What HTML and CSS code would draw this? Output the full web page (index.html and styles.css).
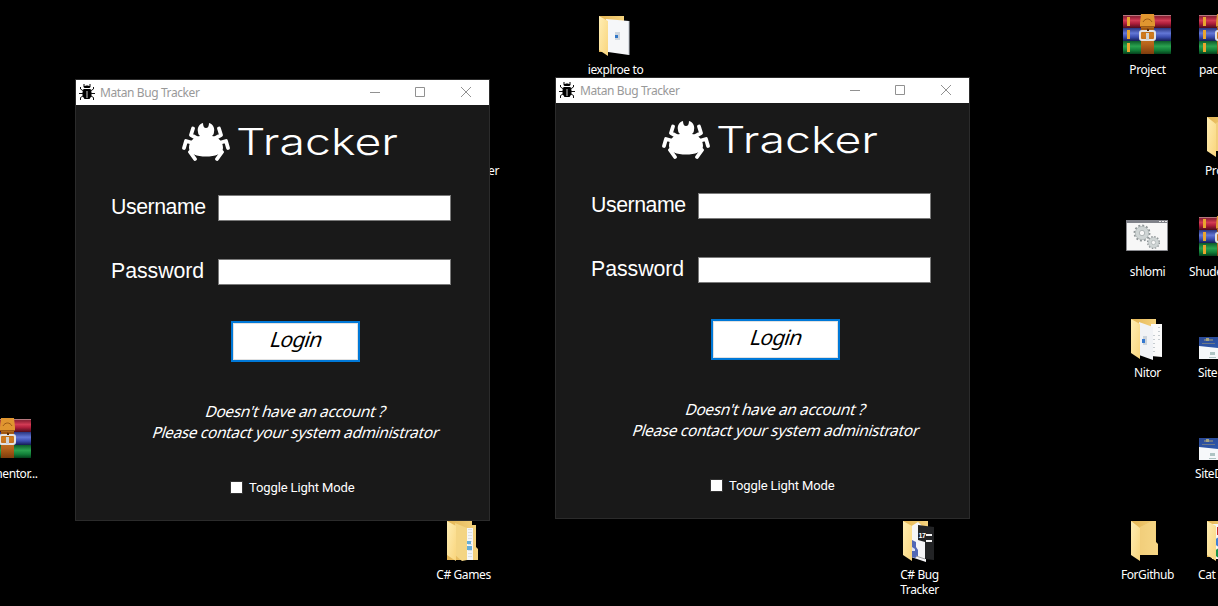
FILE: index.html
```html
<!DOCTYPE html>
<html lang="en">
<head>
<meta charset="utf-8">
<title>Matan Bug Tracker</title>
<link rel="stylesheet" href="styles.css">
</head>
<body>
<svg class="defs" aria-hidden="true">
  <defs>
    <linearGradient id="red" x2="0" y2="1"><stop offset="0" stop-color="#c9a0a0"/><stop offset=".12" stop-color="#8e1f34"/><stop offset=".42" stop-color="#d23b54"/><stop offset=".65" stop-color="#b01f3c"/><stop offset="1" stop-color="#4d0c1c"/></linearGradient>
    <linearGradient id="blue" x2="0" y2="1"><stop offset="0" stop-color="#29357e"/><stop offset=".4" stop-color="#6377d6"/><stop offset=".7" stop-color="#3a4cae"/><stop offset="1" stop-color="#151c52"/></linearGradient>
    <linearGradient id="green" x2="0" y2="1"><stop offset="0" stop-color="#0d5a2a"/><stop offset=".4" stop-color="#2aa24f"/><stop offset=".7" stop-color="#128039"/><stop offset="1" stop-color="#043f1b"/></linearGradient>
    <linearGradient id="strap" x2="0" y2="1"><stop offset="0" stop-color="#e59a34"/><stop offset=".3" stop-color="#d98a25"/><stop offset=".36" stop-color="#9b5412"/><stop offset=".5" stop-color="#d27d1e"/><stop offset=".75" stop-color="#b8651b"/><stop offset="1" stop-color="#7e3c0d"/></linearGradient>
    <linearGradient id="flap" x2="1" y2="1"><stop offset="0" stop-color="#ffeeb4"/><stop offset="1" stop-color="#f9d57d"/></linearGradient>
    <linearGradient id="back" x2="1" y2="0"><stop offset="0" stop-color="#e3b453"/><stop offset="1" stop-color="#f5d37f"/></linearGradient>
    <linearGradient id="header" x2="1" y2="1"><stop offset="0" stop-color="#2c4a96"/><stop offset="1" stop-color="#2d5fb8"/></linearGradient>
  </defs>
  <symbol id="rar" viewBox="0 0 48 48">
    <path fill="url(#red)" d="M0 3h48v13H0z"/><path fill="url(#blue)" d="M0 16h48v13H0z"/><path fill="url(#green)" d="M0 29h48v13H0z"/>
    <path fill="#e9a62f" d="M4 5h3v9H4zM4 18h3v9H4zM4 31h3v9H4z"/>
    <path fill="url(#strap)" d="M18 2h13v40H18z"/>
    <path fill="#e09630" d="M17 11l1-9h13l1 9v3H17z"/>
    <path fill="none" stroke="#9b5916" d="M20 10c2-4 7-4 9 0M17 14.500h15"/><path fill="#8a4a10" d="M24 16h1v2h-1z"/>
    <rect x="17" y="19" width="15" height="9" rx="2" fill="none" stroke="#e2e2e2" stroke-width="2"/>
    <path fill="#d0d4d6" d="M23 21h3v7h-3z"/><path fill="#5a2b08" d="M24 17h2v2h-2z"/>
  </symbol>
  <symbol id="folder" viewBox="0 0 48 48">
    <path fill="url(#back)" d="M8 4h25v21l2 2v11H8z"/>
    <path fill="#f7d98c" d="M17 10l12-6h3v20l2 3v11H16z" opacity=".6"/>
    <path fill="url(#flap)" d="M8 4l9 7v33l-9-6z"/>
  </symbol>
  <symbol id="folder-doc" viewBox="0 0 48 48">
    <path fill="url(#back)" d="M8 4h25v36H8z"/>
    <path fill="#f6f7f9" d="M15 7l23 2v34l-21-3z"/><path stroke="#b9bfc9" d="M38 9v34"/>
    <path fill="#cfd6de" d="M24 20h5v8h-5z"/><path fill="#3478c7" d="M24 23h3v3h-3z"/>
    <path fill="url(#flap)" d="M8 4l9 5v35l-9-6z"/>
  </symbol>
  <symbol id="folder-docs" viewBox="0 0 48 48">
    <path fill="url(#back)" d="M8 4h25v34H8z"/>
    <path fill="#fafafa" d="M28 9h11v33l-11-1z"/><path stroke="#c6ccd0" stroke-dasharray="1 3" stroke-width="2" d="M36 12v14M31 20v18"/>
    <path fill="#f1f3f6" d="M16 7l14 5v33l-14-5z"/><path fill="#cbd3db" d="M20 21h4v9h-4z"/><path fill="#3478d0" d="M19 24h3v4h-3z"/>
    <path fill="url(#flap)" d="M8 4l9 5v35l-9-6z"/>
  </symbol>
  <symbol id="folder-games" viewBox="0 0 48 48">
    <path fill="url(#back)" d="M8 4h25v4h4v22l2 2v11H8z"/>
    <path fill="#f4f6f8" d="M27 11h7v32h-7z"/><path stroke="#dbe0e3" stroke-dasharray="1 2" stroke-width="4" d="M31 12v30"/><path fill="#66add8" d="M28 24h4v3h-4zM28 29h5v4h-5z"/>
    <path fill="#f4d584" d="M16 6l12 5v32l-5 1-7-6z"/>
    <path fill="url(#flap)" d="M8 4l9 5v35l-9-6z"/>
  </symbol>
  <symbol id="folder-dark" viewBox="0 0 48 48">
    <path fill="url(#back)" d="M8 4h25v34H8z"/>
    <path fill="#f5f5f7" d="M15 10l8-5 8 8v32l-15-5z"/>
    <path fill="#222325" d="M23 8l16 2v33l-9-1V25l-7-2z"/>
    <path fill="#f6f6f6" d="M31 17h6v2h-6zM31 23h6v2h-6z"/>
    <text x="23.500" y="21" font-family="Liberation Sans, sans-serif" font-size="7" font-weight="bold" fill="#fff">17</text>
    <path fill="#5268b6" d="M17 23l4 2v5l2 3v6l-3 2-3-1z"/><path fill="#dde2f3" d="M17 30l3 2v2h-3z"/><path stroke="#a5a5a8" d="M21 39l9 3"/>
    <path fill="url(#flap)" d="M8 4l9 5v35l-9-6z"/>
  </symbol>
  <symbol id="folder-cat" viewBox="0 0 48 48">
    <path fill="url(#back)" d="M8 4h25v36H8z"/><path fill="#f6f6f4" d="M13 7h24v35H13z"/>
    <path fill="#c9302b" d="M18 10h15v8H18z"/><circle cx="21" cy="25" r="5" fill="#3e7fd4"/><circle cx="21" cy="36" r="5" fill="#199348"/>
    <path fill="url(#flap)" d="M8 4l9 5v35l-9-6z"/>
  </symbol>
  <symbol id="gear" viewBox="-10 -10 20 20">
    <circle r="8.2" fill="none" stroke="#8f9698" stroke-width="2.4" stroke-dasharray="2.15 2.14"/>
    <circle r="5.3" fill="none" stroke="#cfd5d5" stroke-width="4.6"/><circle r="7.4" fill="none" stroke="#a8afb0" stroke-width=".7"/><circle r="3" fill="none" stroke="#9ca3a5" stroke-width=".8"/>
  </symbol>
  <symbol id="batch" viewBox="0 2 48 48">
    <path fill="#f7f7f7" stroke="#8a8b90" d="M3.500 8.500h41v30h-41z"/><path fill="#80828a" d="M3 8h42v3H3z"/>
    <path fill="#e8e8e8" d="M36 9h2v1h-2zM39 9h2v1h-2zM42 9h2v1h-2z"/>
    <use href="#gear" x="10" y="12" width="18" height="18"/><use href="#gear" x="23.500" y="23.500" width="14" height="14"/>
  </symbol>
  <symbol id="site" viewBox="0 -1 48 48">
    <path fill="#f6f8fa" d="M0 21h48v22H0z"/><path fill="url(#header)" d="M0 21h48v12L20 32 0 30z"/>
    <path fill="#6c7888" d="M5 23h9v2H5zM3 27h13v1H3z"/><path fill="#a6a480" d="M7 22h3v3H7z"/><path fill="#aec4c3" d="M11 36h5v3h-5zM10 41h7v1h-7z"/>
  </symbol>
  <symbol id="bug" viewBox="0 0 48 39">
    <path d="M16 9c-1-4 1-8 5-9 0 3 1 5 3 5s3-2 3-5c4 1 6 5 5 9 0 2-1 3-2 4 7 1 11 6 11 12 0 6-8 8.500-17 8.500S7 31 7 25c0-6 4-11 11-12-1-1-2-2-2-4z"/>
    <path fill="none" stroke="currentColor" stroke-width="3.800" stroke-linecap="round" stroke-linejoin="round" d="M11 5.500L9 12l9 5M37 5.500l2 6.500-9 5M2 25l2-7 7 2M46 25l-2-7-7 2M13 36l-5-7 6-3M35 36l5-7-6-3"/>
  </symbol>
  <symbol id="beetle" viewBox="0 0 16 16">
    <path d="M4.500 0h1v2h1V1.500h3V2h1V0h1v3l-1 1H5.500l-1-1zM4.500 5h7l1 3v4l-2 3h-5l-2-3V8z"/>
    <path fill="none" stroke="#111" d="M1.500 3v2l3 2M14.500 3v2l-3 2M0 9.500h4M12 9.500h4M4 12l-2.500 1.500V16M12 12l2.500 1.500V16"/>
    <path fill="#fff" d="M7.600 7h.8v7h-.8zM5 4.500h6v.6H5z"/>
  </symbol>
</svg>

<main class="desktop">
  <div class="item at-iexplore"><svg class="icon"><use href="#folder-doc"/></svg><span class="label">iexplroe to</span></div>
  <div class="item at-covered"><span class="label">er</span></div>
  <div class="item at-mentor"><svg class="icon"><use href="#rar"/></svg><span class="label">mentor...</span></div>
  <div class="item at-games"><svg class="icon"><use href="#folder-games"/></svg><span class="label">C# Games</span></div>
  <div class="item at-tracker"><svg class="icon"><use href="#folder-dark"/></svg><span class="label">C# Bug<br>Tracker</span></div>

  <div class="item col-a row-1"><svg class="icon"><use href="#rar"/></svg><span class="label">Project</span></div>
  <div class="item col-a row-3"><svg class="icon"><use href="#batch"/></svg><span class="label">shlomi</span></div>
  <div class="item col-a row-4"><svg class="icon"><use href="#folder-docs"/></svg><span class="label">Nitor</span></div>
  <div class="item col-a row-6"><svg class="icon"><use href="#folder"/></svg><span class="label">ForGithub</span></div>

  <div class="item col-b row-1"><svg class="icon"><use href="#rar"/></svg><span class="label cut in-14">pac</span></div>
  <div class="item col-b row-2"><svg class="icon"><use href="#folder"/></svg><span class="label cut in-20">Pro</span></div>
  <div class="item col-b row-3"><svg class="icon"><use href="#rar"/></svg><span class="label cut in-4">Shude</span></div>
  <div class="item col-b row-4"><svg class="icon"><use href="#site"/></svg><span class="label cut in-13">Site</span></div>
  <div class="item col-b row-5"><svg class="icon"><use href="#site"/></svg><span class="label cut in-10">SiteD</span></div>
  <div class="item col-b row-6"><svg class="icon"><use href="#folder-cat"/></svg><span class="label cut in-13">Cat</span></div>

  <section class="window left">
    <header class="titlebar">
      <svg class="app-icon"><use href="#beetle"/></svg><span class="title">Matan Bug Tracker</span>
      <svg class="controls" viewBox="0 0 102 12"><path d="M0 6.500h10M45.500 1.500h9v9h-9zM91 1l10 10M101 1L91 11"/></svg>
    </header>
    <div class="logo">
      <svg class="bug"><use href="#bug"/></svg>
      <svg class="wordmark"><text x="0" y="32" textLength="162" lengthAdjust="spacingAndGlyphs">Tracker</text></svg>
    </div>
    <form class="form">
      <label class="field"><span class="name user">Username</span><input class="box" type="text"></label>
      <label class="field"><span class="name">Password</span><input class="box" type="password"></label>
      <button class="login" type="button"><span class="slant">Login</span></button>
      <p class="hint"><span class="slant">Doesn't have an account ?</span><span class="slant">Please contact your system administrator</span></p>
      <label class="toggle"><input class="check" type="checkbox"><span>Toggle Light Mode</span></label>
    </form>
  </section>

  <section class="window right">
    <header class="titlebar">
      <svg class="app-icon"><use href="#beetle"/></svg><span class="title">Matan Bug Tracker</span>
      <svg class="controls" viewBox="0 0 102 12"><path d="M0 6.500h10M45.500 1.500h9v9h-9zM91 1l10 10M101 1L91 11"/></svg>
    </header>
    <div class="logo">
      <svg class="bug"><use href="#bug"/></svg>
      <svg class="wordmark"><text x="0" y="32" textLength="162" lengthAdjust="spacingAndGlyphs">Tracker</text></svg>
    </div>
    <form class="form">
      <label class="field"><span class="name user">Username</span><input class="box" type="text"></label>
      <label class="field"><span class="name">Password</span><input class="box" type="password"></label>
      <button class="login" type="button"><span class="slant">Login</span></button>
      <p class="hint"><span class="slant">Doesn't have an account ?</span><span class="slant">Please contact your system administrator</span></p>
      <label class="toggle"><input class="check" type="checkbox"><span>Toggle Light Mode</span></label>
    </form>
  </section>
</main>
</body>
</html>
```

FILE: styles.css
```css
* { box-sizing: border-box; }
body { margin: 0; background: #000; }
.defs { position: absolute; width: 0; height: 0; }
.desktop { position: relative; width: 1218px; height: 606px; overflow: hidden; color: #fff; font: 12px/15px "Noto Sans", sans-serif; letter-spacing: -0.4px; }

/* Desktop shortcuts */
.item { position: absolute; width: 76px; display: flex; flex-direction: column; align-items: center; gap: 2px; }
.icon { width: 48px; height: 48px; flex: none; }
.label { text-align: center; white-space: nowrap; padding-left: 1px; }
.cut { align-self: flex-start; }
.in-4 { padding-left: 4px; }
.in-10 { padding-left: 10px; }
.in-13 { padding-left: 13px; }
.in-14 { padding-left: 14px; }
.in-20 { padding-left: 20px; }
.col-a { left: 1109px; }
.col-b { left: 1185px; }
.row-1 { top: 12px; }
.row-2 { top: 113px; }
.row-3 { top: 214px; }
.row-4 { top: 315px; }
.row-5 { top: 416px; }
.row-6 { top: 517px; }
.at-iexplore { left: 577px; top: 12px; }
.at-covered { left: 455px; top: 163px; }
.at-mentor { left: -31px; top: 416px; }
.at-mentor .label { padding-left: 15px; }
.at-games { left: 425px; top: 517px; }
.at-tracker { left: 881px; top: 517px; }

/* Application windows */
.window { position: absolute; width: 415px; height: 442px; border: 1px solid #2b2b2b; background: #191919; }
.left { left: 75px; top: 79px; }
.right { left: 555px; top: 77px; }
.titlebar { display: flex; align-items: center; height: 25px; padding: 0 17px 1px 3px; background: #fff; color: #999; }
.app-icon { width: 16px; height: 16px; margin-right: 5px; }
.title { flex: 1; }
.controls { width: 102px; height: 12px; fill: none; stroke: #919191; }
.logo { display: flex; gap: 6px; height: 90px; padding: 18px 0 0 106px; }
.bug { width: 48px; height: 39px; fill: #fff; color: #fff; }
.wordmark { width: 166px; height: 42px; fill: #fff; font: 300 37px Inter, sans-serif; letter-spacing: 0; }
.form { display: flex; flex-direction: column; }
.field { display: flex; height: 26px; margin-bottom: 38px; padding-left: 35px; }
.name { width: 107px; font: 21.3px/25px "Liberation Sans", Arial, sans-serif; letter-spacing: -0.05px; }
.user { letter-spacing: -0.45px; }
.box { width: 233px; height: 26px; border: 1px solid #7a7a7a; border-radius: 0; background: #fff; }
.login { width: 129px; height: 41px; margin: -2px 0 0 155px; padding: 0 0 4px 2px; border: 2px solid #0078d7; border-radius: 0; background: #fff; box-shadow: inset 0 0 0 1px #e1e1e1; color: #000; font: 21px/33px "Noto Sans", sans-serif; letter-spacing: -0.8px; }
.slant { display: inline-block; transform: skewX(-18deg); }
.hint { display: flex; flex-direction: column; align-items: center; margin: 39px 0 0 27px; font: 15.4px/21px "Noto Sans", sans-serif; letter-spacing: -0.32px; white-space: nowrap; }
.toggle { display: flex; align-items: center; gap: 7px; margin: 36px 0 0 155px; font: 13px/16px Roboto, sans-serif; letter-spacing: -0.12px; }
.toggle span { padding-top: 1px; }
.check { appearance: none; width: 11px; height: 11px; margin: 0; background: #fff; outline: 1px solid #333; }
```
